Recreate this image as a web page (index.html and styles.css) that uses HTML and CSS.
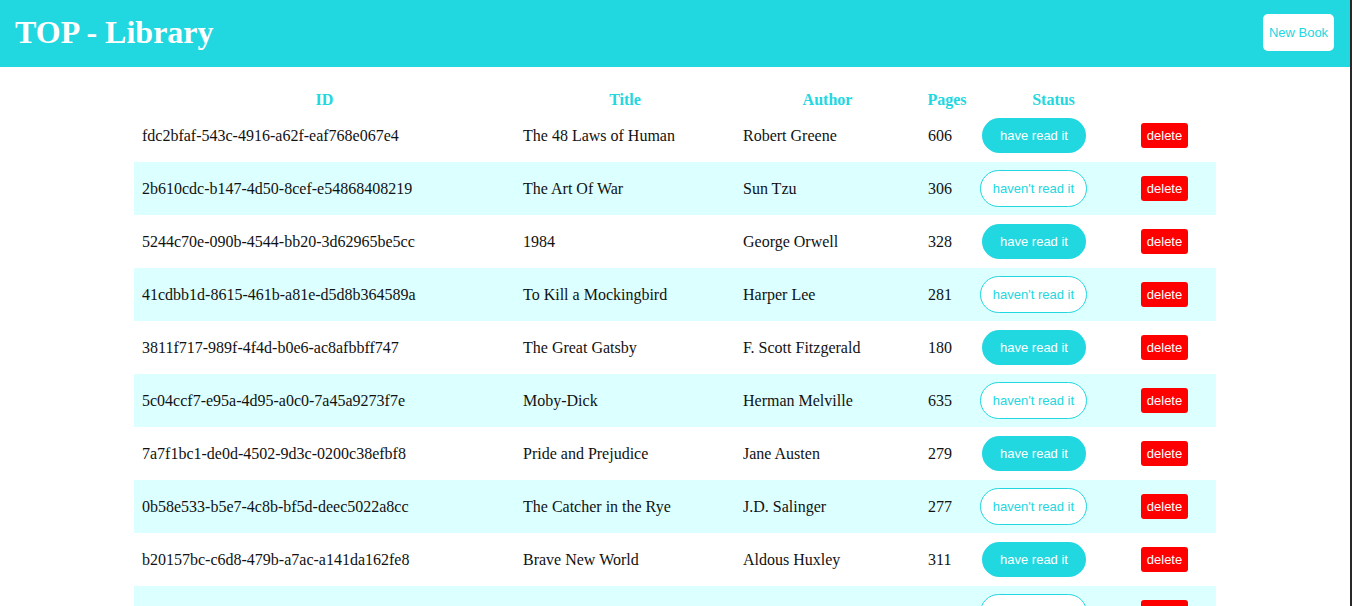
FILE: index.html
```html
<!DOCTYPE html>
<html lang="en">
<head>
<meta charset="utf-8">
<title>TOP - Library</title>
<link rel="stylesheet" href="styles.css">
</head>
<body>
<header class="topbar">
  <h1 class="brand">TOP - Library</h1>
  <button class="new-book">New Book</button>
</header>
<main>
  <table class="books">
    <colgroup>
      <col class="c-id"><col class="c-title"><col class="c-author"><col class="c-pages"><col class="c-status"><col class="c-del">
    </colgroup>
    <thead>
      <tr><th>ID</th><th>Title</th><th>Author</th><th>Pages</th><th>Status</th><th></th></tr>
    </thead>
    <tbody>
      <tr><td>fdc2bfaf-543c-4916-a62f-eaf768e067e4</td><td>The 48 Laws of Human</td><td>Robert Greene</td><td>606</td><td class="st"><button class="read">have read it</button></td><td><button class="del">delete</button></td></tr>
      <tr><td>2b610cdc-b147-4d50-8cef-e54868408219</td><td>The Art Of War</td><td>Sun Tzu</td><td>306</td><td class="st"><button class="unread">haven't read it</button></td><td><button class="del">delete</button></td></tr>
      <tr><td>5244c70e-090b-4544-bb20-3d62965be5cc</td><td>1984</td><td>George Orwell</td><td>328</td><td class="st"><button class="read">have read it</button></td><td><button class="del">delete</button></td></tr>
      <tr><td>41cdbb1d-8615-461b-a81e-d5d8b364589a</td><td>To Kill a Mockingbird</td><td>Harper Lee</td><td>281</td><td class="st"><button class="unread">haven't read it</button></td><td><button class="del">delete</button></td></tr>
      <tr><td>3811f717-989f-4f4d-b0e6-ac8afbbff747</td><td>The Great Gatsby</td><td>F. Scott Fitzgerald</td><td>180</td><td class="st"><button class="read">have read it</button></td><td><button class="del">delete</button></td></tr>
      <tr><td>5c04ccf7-e95a-4d95-a0c0-7a45a9273f7e</td><td>Moby-Dick</td><td>Herman Melville</td><td>635</td><td class="st"><button class="unread">haven't read it</button></td><td><button class="del">delete</button></td></tr>
      <tr><td>7a7f1bc1-de0d-4502-9d3c-0200c38efbf8</td><td>Pride and Prejudice</td><td>Jane Austen</td><td>279</td><td class="st"><button class="read">have read it</button></td><td><button class="del">delete</button></td></tr>
      <tr><td>0b58e533-b5e7-4c8b-bf5d-deec5022a8cc</td><td>The Catcher in the Rye</td><td>J.D. Salinger</td><td>277</td><td class="st"><button class="unread">haven't read it</button></td><td><button class="del">delete</button></td></tr>
      <tr><td>b20157bc-c6d8-479b-a7ac-a141da162fe8</td><td>Brave New World</td><td>Aldous Huxley</td><td>311</td><td class="st"><button class="read">have read it</button></td><td><button class="del">delete</button></td></tr>
      <tr class="last"><td></td><td></td><td></td><td></td><td class="st"><button class="unread"></button></td><td><button class="del"></button></td></tr>
    </tbody>
  </table>
</main>
</body>
</html>
```
FILE: styles.css
```css
html {
  margin: 0;
  padding: 0;
  background: #282828;
}
body {
  margin: 0 2px 0 0;
  padding: 0;
  min-height: 100vh;
  background: #ffffff;
  font-family: "Liberation Serif", "Times New Roman", serif;
  font-size: 16px;
  color: #111;
}
.topbar {
  height: 67px;
  background: #21d7e0;
  display: flex;
  align-items: center;
  justify-content: space-between;
  padding: 0 16px 3px 15px;
  box-sizing: border-box;
}
.brand {
  margin: 0;
  font-size: 32px;
  font-weight: bold;
  color: #ffffff;
  line-height: 1;
}
.new-book {
  width: 71px;
  height: 37px;
  padding: 0;
  background: #ffffff;
  border: none;
  border-radius: 5px;
  color: #21d7e0;
  font-family: "Liberation Sans", Arial, sans-serif;
  font-size: 13px;
}
.books {
  width: 1082px;
  margin: 22px auto 0;
  border-collapse: collapse;
  table-layout: fixed;
}
.c-id { width: 381px; }
.c-title { width: 220px; }
.c-author { width: 185px; }
.c-pages { width: 54px; }
.c-status { width: 159px; }
.c-del { width: 83px; }
.books th {
  height: 18px;
  padding: 2px 0 0;
  color: #21d7e0;
  font-weight: bold;
  text-align: center;
  vertical-align: middle;
}
.books td {
  height: 53px;
  padding: 0 8px;
  box-sizing: border-box;
  vertical-align: middle;
  white-space: nowrap;
}
.books tbody tr:nth-child(even) {
  background: #dcffff;
}
.books td.st {
  padding-left: 6px;
}
.read, .unread, .del {
  font-family: "Liberation Sans", Arial, sans-serif;
  font-size: 13px;
  padding: 0;
  display: block;
}
.read {
  width: 104px;
  height: 35px;
  margin-left: 2px;
  border: none;
  border-radius: 18px;
  background: #21d7e0;
  color: #ffffff;
}
.unread {
  width: 107px;
  height: 37px;
  border: 1px solid #21d7e0;
  border-radius: 19px;
  background: #ffffff;
  color: #21d7e0;
}
.del {
  width: 47px;
  height: 25px;
  border: none;
  border-radius: 3px;
  background: #ff0000;
  color: #ffffff;
}
```
